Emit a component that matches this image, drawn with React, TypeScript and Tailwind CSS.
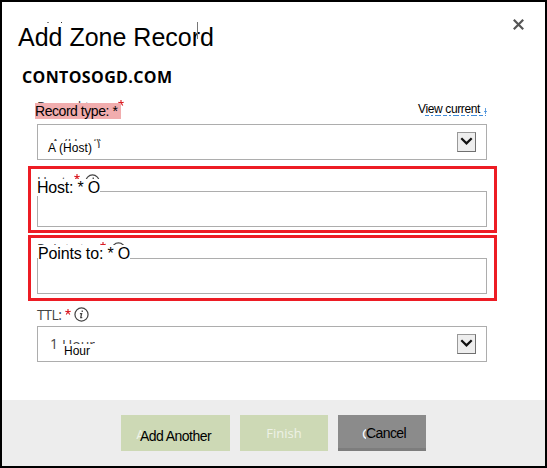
import React from "react";

const ARIAL = "font-['Liberation_Sans',Arial,sans-serif] text-black whitespace-nowrap";
const SEGOE = "font-['Open_Sans','Noto_Sans',sans-serif] text-[#444] whitespace-nowrap";

function Arrow() {
  return (
    <span className="flex h-5 w-[19px] shrink-0 justify-center border border-[#999] border-r-[#707070] border-b-[#707070] bg-[#eee] pt-[4px]">
      <svg width="13" height="9" viewBox="0 0 13 9" fill="none" stroke="#111" strokeWidth="2.2">
        <path d="M1.3 1.2 6.5 6.4 11.7 1.2" />
      </svg>
    </span>
  );
}

function Select({ children }: { children: React.ReactNode }) {
  return (
    <div className="relative flex h-9 w-[450px] items-center justify-between border border-[#adadad] bg-white pl-[10px] pr-[10px]">
      {children}
      <Arrow />
    </div>
  );
}

function InfoIcon() {
  return (
    <svg width="15" height="15" viewBox="0 0 16 16" fill="none" stroke="#444" className="shrink-0">
      <circle cx="8" cy="8" r="7" strokeWidth="1.3" />
      <path d="M6.3 7h1.8L7.2 11.4h1.6" strokeWidth="1.4" />
      <path d="M8.1 4.4h1.4" strokeWidth="1.6" />
    </svg>
  );
}

function Required() {
  return (
    <svg width="6" height="6" viewBox="0 0 6 6" fill="none" stroke="#d9141c" strokeWidth="1.1" className="shrink-0">
      <path d="M3 0v3M.3 2.2 3 3l2.7-.8M1.2 5.5 3 3l1.8 2.5" />
    </svg>
  );
}

export default function App() {
  return (
    <div className="flex h-[468px] w-[547px] flex-col overflow-hidden border-2 border-black bg-white">
      <header className="flex h-[98px] shrink-0 justify-between pl-4 pr-[21px]">
        <div className="relative pt-[20px]">
          <h1 className={`${ARIAL} text-[25px] leading-[30px]`}>Add Zone Record</h1>
          <h2 className="ml-1 mt-[14px] whitespace-nowrap font-['Open_Sans','Noto_Sans',sans-serif] text-[16px] font-bold leading-[22px] tracking-[0.38px] text-black">
            CONTOSOGD.COM
          </h2>
          <span className="absolute left-[29px] top-[20px] h-px w-[2px] bg-[#888]" />
          <span className="absolute left-[43px] top-[20px] h-px w-px bg-[#333]" />
          <span className="absolute left-[179px] top-[20px] h-[17px] w-px bg-[#777]" />
        </div>
        <svg className="mt-[17px]" width="11" height="11" viewBox="0 0 11 11" fill="none" stroke="#555" strokeWidth="2.2">
          <path d="M.8.8 10.2 10.2M10.2.8.8 10.2" />
        </svg>
      </header>

      <main className="h-[300px] shrink-0 pl-[26px]">
        <div className="flex h-6 w-[459px] items-start justify-between pl-[7px]">
          <div className="relative">
            <div className={`${SEGOE} flex h-[3px] items-start overflow-hidden pl-[2px] text-[13.5px] leading-[14px]`}>
              <span className="-mt-[1px]">Record type:</span>
            </div>
            <div className="absolute left-[83px] top-0">
              <Required />
            </div>
            <div className={`${ARIAL} relative h-4 w-[86px] bg-[#f1adae] text-[14px] leading-4 tracking-[-0.45px]`}>Record type: *</div>
          </div>
          <div className="relative pr-[7px]">
            <div className={`${ARIAL} text-[12px] leading-[18px] tracking-[-0.38px]`}>View current</div>
            <svg className="absolute right-0 top-[8px]" width="65" height="9" viewBox="0 0 65 9" fill="none" stroke="#3f8ad8">
              <path d="M3 7.5H64" strokeDasharray="4 2 2 2 6 2" />
              <path d="M63.5 0v6M62 3.5h3" strokeWidth=".8" />
            </svg>
          </div>
        </div>

        <div className="ml-[9px]">
          <Select>
            <div className={`${SEGOE} absolute left-[13px] top-[12px] h-[4px] overflow-hidden text-[14px] leading-[14px]`}>A (Host)</div>
            <div className={`${SEGOE} absolute left-[58px] top-[12px] h-[11px] overflow-hidden text-[14px] leading-[14px]`}>)</div>
            <span className={`${ARIAL} pt-[12px] text-[12px] leading-4 tracking-[0.1px]`}>A (Host)</span>
          </Select>
        </div>

        <section className="mt-[6px] flex h-[67px] w-[469px] flex-col border-[3px] border-[#ed1c24] px-[6px] pt-[5px]">
          <div className={`${SEGOE} flex h-[5px] shrink-0 items-start overflow-hidden text-[13.5px] leading-[14px]`}>
            <span>Host:</span>
            <span className="ml-[4px]"><Required /></span>
            <span className="ml-[5px]"><InfoIcon /></span>
          </div>
          <div className={`${ARIAL} z-10 h-[17px] w-[63px] shrink-0 bg-white text-[16px] leading-[17px] tracking-[-0.2px]`}>Host: * O</div>
          <div className="-mt-[5px] h-9 w-[450px] shrink-0 border border-[#adadad]" />
        </section>

        <section className="mt-[2px] flex h-[66px] w-[469px] flex-col border-[3px] border-[#ed1c24] px-[6px] pt-[4px]">
          <div className={`${SEGOE} flex h-[3px] shrink-0 items-start overflow-hidden text-[13.5px] leading-[12px]`}>
            <span>Points to:</span>
            <span className="ml-[4px]"><Required /></span>
            <span className="ml-[5px]"><InfoIcon /></span>
          </div>
          <div className={`${ARIAL} z-10 ml-px h-[17px] w-[92px] shrink-0 bg-white text-[16px] leading-[17px] tracking-[-0.15px]`}>Points to: * O</div>
          <div className="-mt-[4px] h-9 w-[450px] shrink-0 border border-[#adadad]" />
        </section>

        <div className={`${SEGOE} ml-[9px] flex h-[25px] items-center pt-[2px] text-[14px] tracking-[-0.5px]`}>
          <span>TTL:</span>
          <span className="mb-[6px] ml-[4px]"><Required /></span>
          <span className="ml-[3px]"><InfoIcon /></span>
        </div>
        <div className="ml-[9px]">
          <Select>
            <div className={`${SEGOE} absolute left-[24px] top-[11px] h-[6px] overflow-hidden text-[14px] leading-[14px]`}>Hour</div>
            <div className="flex items-center">
              <span className={`${SEGOE} w-4 pl-[2px] text-[14px] leading-[16px]`}>1</span>
              <span className={`${ARIAL} pt-[14px] text-[12px] leading-4`}>Hour</span>
            </div>
          </Select>
        </div>
      </main>

      <footer className="flex h-[66px] shrink-0 gap-[10px] bg-[#ededed] pl-[119px] pt-[15px]">
        <button className="relative flex h-9 w-[109px] bg-[#cdd9b5] pl-[19px] pt-[13px]">
          <span className="absolute left-[15px] top-[13px] h-[11px] w-[6px] overflow-hidden whitespace-nowrap font-['Open_Sans',sans-serif] text-[14px] leading-[14px] text-[#eef2e6]">A</span>
          <span className={`${ARIAL} relative text-[14px] leading-4 tracking-[-0.55px]`}>Add Another</span>
        </button>
        <button className="h-9 w-[88px] bg-[#cdd9b5] pt-[2px] font-['Open_Sans','Noto_Sans',sans-serif] text-[13px] font-medium text-[#eef2e6]">Finish</button>
        <button className="relative flex h-9 w-[88px] border-b-[3px] border-[#7d7d7d] bg-[#8b8b8b] pl-[28px] pt-[10px]">
          <span className="absolute left-[24px] top-[12px] h-[14px] w-[4px] overflow-hidden font-['Open_Sans',sans-serif] text-[14px] leading-[14px] text-white">C</span>
          <span className={`${ARIAL} relative text-[14px] leading-4 tracking-[-0.6px]`}>Cancel</span>
        </button>
      </footer>
    </div>
  );
}
